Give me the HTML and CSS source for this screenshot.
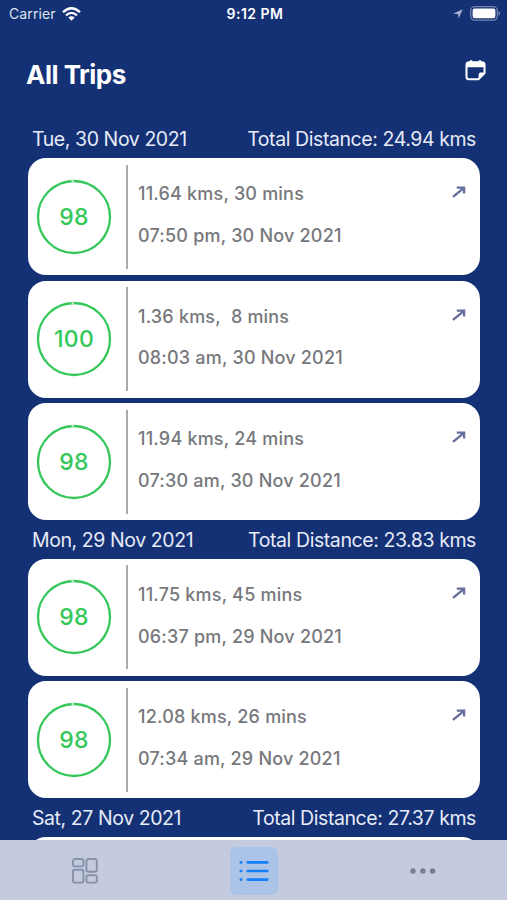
FILE: index.html
```html
<!DOCTYPE html>
<html lang="en">
<head>
    <meta charset="UTF-8">
    <meta name="viewport" content="width=device-width, initial-scale=1.0">
    <title>All Trips</title>
    <link rel="stylesheet" href="styles.css">
</head>
<body>

    <!-- Shared shapes -->
    <svg class="sprite" aria-hidden="true">
        <symbol id="ring" viewBox="0 0 76 76">
            <circle cx="38" cy="38" r="36" fill="none" stroke="#34c759" stroke-width="2.3"/>
            <path d="M35.6 2h2.2" stroke="#bcefc9" stroke-width="2.6"/>
        </symbol>
        <symbol id="arrow" viewBox="0 0 14 12">
            <path d="M1 10.8 12 1.8M4.8 1.6h7.3v6" fill="none" stroke="#656e9b" stroke-width="2.3"/>
        </symbol>
    </svg>

    <!-- Status bar -->
    <div class="status-bar">
        <div class="carrier">
            <span>Carrier</span>
            <svg width="19" height="14" viewBox="0 0 19 14" fill="none" stroke="#fff" stroke-width="2.3">
                <path d="M1 5.2Q9.5-2.6 18 5.2M4 8.3Q9.5 3.4 15 8.3"/>
                <path d="M6.3 10.5Q9.5 7.8 12.7 10.5L9.5 13.8Z" fill="#fff" stroke="none"/>
            </svg>
        </div>
        <div class="clock">9:12 PM</div>
        <div class="battery">
            <svg width="10" height="10" viewBox="0 0 10 10"><path d="M0 4.7 9.7.2 5.6 9.6 5 5Z" fill="#a7b3d0"/></svg>
            <svg width="31" height="15" viewBox="0 0 31 15">
                <rect x=".7" y=".7" width="26.6" height="13.4" rx="4" fill="none" stroke="#7585ad" stroke-width="1.3"/>
                <rect x="2.6" y="2.6" width="22.8" height="9.6" rx="2.2" fill="#fff"/>
                <path d="M28.6 5q3 2.4 0 4.8Z" fill="#8391b5"/>
            </svg>
        </div>
    </div>

    <div class="page-header">
        <h1>All Trips</h1>
        <svg width="21" height="21" viewBox="0 0 21 21">
            <path d="M4 2.3h13a2.5 2.5 0 0 1 2.5 2.5v8.4l-6 6H4a2.5 2.5 0 0 1-2.5-2.5V4.8A2.5 2.5 0 0 1 4 2.3Z" fill="none" stroke="#fff" stroke-width="2"/>
            <path d="M1.5 3h18v4.2h-18ZM5 .3h2.3v3H5ZM13.7.3H16v3h-2.3ZM19.8 12.5h-4.2a2 2 0 0 0-2 2v5.2Z" fill="#fff"/>
        </svg>
    </div>

    <div class="trip-list">
        <div class="day-header"><span class="day">Tue, 30 Nov 2021</span><span class="total">Total Distance: 24.94 kms</span></div>
        <div class="trip-card">
            <div class="score"><svg><use href="#ring"/></svg><span>98</span></div>
            <div class="trip-info">
                <p>11.64 kms, 30 mins</p>
                <p>07:50 pm, 30 Nov 2021</p>
            </div>
            <svg class="arrow"><use href="#arrow"/></svg>
        </div>
        <div class="trip-card">
            <div class="score"><svg><use href="#ring"/></svg><span>100</span></div>
            <div class="trip-info">
                <p>1.36 kms,&nbsp; 8 mins</p>
                <p>08:03 am, 30 Nov 2021</p>
            </div>
            <svg class="arrow"><use href="#arrow"/></svg>
        </div>
        <div class="trip-card">
            <div class="score"><svg><use href="#ring"/></svg><span>98</span></div>
            <div class="trip-info">
                <p>11.94 kms, 24 mins</p>
                <p>07:30 am, 30 Nov 2021</p>
            </div>
            <svg class="arrow"><use href="#arrow"/></svg>
        </div>

        <div class="day-header"><span class="day">Mon, 29 Nov 2021</span><span class="total">Total Distance: 23.83 kms</span></div>
        <div class="trip-card">
            <div class="score"><svg><use href="#ring"/></svg><span>98</span></div>
            <div class="trip-info">
                <p>11.75 kms, 45 mins</p>
                <p>06:37 pm, 29 Nov 2021</p>
            </div>
            <svg class="arrow"><use href="#arrow"/></svg>
        </div>
        <div class="trip-card">
            <div class="score"><svg><use href="#ring"/></svg><span>98</span></div>
            <div class="trip-info">
                <p>12.08 kms, 26 mins</p>
                <p>07:34 am, 29 Nov 2021</p>
            </div>
            <svg class="arrow"><use href="#arrow"/></svg>
        </div>

        <div class="day-header"><span class="day">Sat, 27 Nov 2021</span><span class="total">Total Distance: 27.37 kms</span></div>
        <div class="trip-card"></div>
    </div>

    <!-- Tab bar -->
    <div class="tab-bar">
        <div class="tab">
            <svg width="26" height="26" viewBox="0 0 26 26" fill="none" stroke="#8791a9" stroke-width="1.9">
                <rect x="1" y="1" width="10.4" height="7.4" rx="2"/>
                <rect x="14.4" y="1" width="10.4" height="12.8" rx="2"/>
                <rect x="1" y="11.8" width="10.4" height="12.8" rx="2"/>
                <rect x="14.4" y="17.2" width="10.4" height="7.4" rx="2"/>
            </svg>
        </div>
        <div class="tab">
            <div class="tab-active">
                <svg width="30" height="22" viewBox="0 0 30 22" stroke="#147efb" stroke-width="2.6" stroke-linecap="round">
                    <path d="M8.8 2.4h19.6M8.8 11h19.6M8.8 19.6h19.6"/>
                    <path d="M1.8 2.4h.4M1.8 11h.4M1.8 19.6h.4"/>
                </svg>
            </div>
        </div>
        <div class="tab">
            <svg width="26" height="6" viewBox="0 0 26 6" fill="#767f92">
                <circle cx="3" cy="3" r="2.7"/>
                <circle cx="12.9" cy="3" r="2.7"/>
                <circle cx="22.6" cy="3" r="2.7"/>
            </svg>
        </div>
    </div>

</body>
</html>
```
FILE: styles.css
```css
* {
    margin: 0;
    padding: 0;
    box-sizing: border-box;
}
body {
    display: flex;
    flex-direction: column;
    height: 900px;
    overflow: hidden;
    background-color: #143175;
    color: #fff;
    font-family: 'Inter', sans-serif;
}
svg {
    display: block;
    flex-shrink: 0;
}
.sprite {
    display: none;
}
.status-bar {
    display: grid;
    grid-template-columns: 1fr auto 1fr;
    align-items: center;
    height: 27px;
    flex-shrink: 0;
    padding: 0 6px 0 9px;
    font-size: 14px;
}
.carrier {
    display: flex;
    align-items: center;
    gap: 6px;
    color: #dfe4f0;
    letter-spacing: 0.1px;
}
.clock {
    font-size: 14px;
    font-weight: 600;
    letter-spacing: 0.5px;
}
.battery {
    display: flex;
    align-items: center;
    justify-content: flex-end;
    gap: 7px;
}
.page-header {
    display: flex;
    justify-content: space-between;
    align-items: center;
    height: 92.6px;
    flex-shrink: 0;
    padding: 0 21px 0 26px;
}
.page-header h1 {
    font-size: 26px;
    font-weight: 700;
    line-height: 32px;
    padding-top: 3px;
    letter-spacing: -0.5px;
}
.page-header svg {
    margin-bottom: 5px;
}
.trip-list {
    flex: 1;
    min-height: 0;
    overflow: hidden;
    padding: 0 27px 0 28px;
}
.day-header {
    display: flex;
    justify-content: space-between;
    align-items: center;
    height: 38.9px;
    padding: 0 4px;
    color: #e6ebf7;
    font-size: 19.5px;
    letter-spacing: -0.42px;
}
.trip-card {
    display: flex;
    height: 117px;
    background-color: #fff;
    border-radius: 18px;
}
.trip-card + .trip-card {
    margin-top: 5.3px;
}
.score {
    display: grid;
    place-items: center;
    width: 100px;
    height: 104px;
    margin-top: 6.5px;
    padding-right: 6px;
    border-right: 2px solid #aaa;
    color: #34c759;
    font-size: 23px;
    font-weight: 500;
    letter-spacing: 0.3px;
}
.score svg,
.score span {
    grid-area: 1 / 1;
}
.score svg {
    width: 76px;
    height: 76px;
}
.trip-info {
    flex: 1;
    padding: 15px 0 0 10px;
    color: #77787c;
    font-size: 18px;
    font-weight: 500;
    line-height: 41.6px;
    letter-spacing: 0.2px;
}
.arrow {
    width: 14px;
    height: 12px;
    margin: 28px 14px 0 0;
}
/* the list scrolls underneath */
.tab-bar {
    position: absolute;
    left: 0;
    right: 0;
    bottom: 0;
    display: grid;
    grid-template-columns: repeat(3, 1fr);
    height: 60px;
    padding-top: 1px;
    background-color: #c5cbdf;
}
.tab {
    display: grid;
    place-items: center;
}
.tab-active {
    display: grid;
    place-items: center;
    width: 48px;
    height: 48px;
    border-radius: 6px;
    background-color: #aac3e6;
}
```
